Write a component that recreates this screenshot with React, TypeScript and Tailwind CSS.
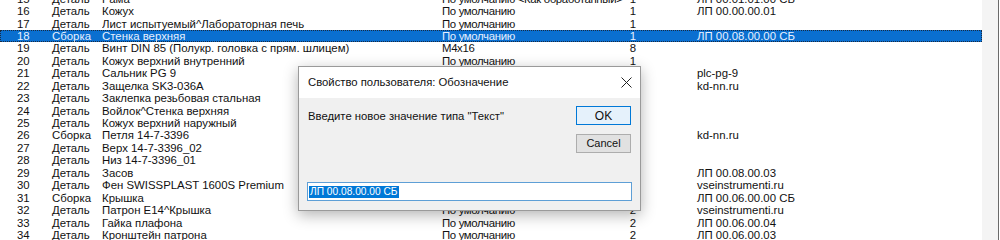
import React from "react";

type Row = {
    n: number;
    type: string;
    name: string;
    mat: string;
    qty: string;
    des: string;
};

const rows: Row[] = [
    { n: 15, type: "Деталь", name: "Рама", mat: "По умолчанию <Как обработанный>", qty: "1", des: "ЛП 00.01.01.00 СБ" },
    { n: 16, type: "Деталь", name: "Кожух", mat: "По умолчанию", qty: "1", des: "ЛП 00.00.00.01" },
    { n: 17, type: "Деталь", name: "Лист испытуемый^Лабораторная печь", mat: "По умолчанию", qty: "1", des: "" },
    { n: 18, type: "Сборка", name: "Стенка верхняя", mat: "По умолчанию", qty: "1", des: "ЛП 00.08.00.00 СБ" },
    { n: 19, type: "Деталь", name: "Винт DIN 85 (Полукр. головка с прям. шлицем)", mat: "M4x16", qty: "8", des: "" },
    { n: 20, type: "Деталь", name: "Кожух верхний внутренний", mat: "По умолчанию", qty: "1", des: "" },
    { n: 21, type: "Деталь", name: "Сальник PG 9", mat: "По умолчанию", qty: "1", des: "plc-pg-9" },
    { n: 22, type: "Деталь", name: "Защелка SK3-036A", mat: "По умолчанию", qty: "1", des: "kd-nn.ru" },
    { n: 23, type: "Деталь", name: "Заклепка резьбовая стальная", mat: "По умолчанию", qty: "4", des: "" },
    { n: 24, type: "Деталь", name: "Войлок^Стенка верхняя", mat: "По умолчанию", qty: "1", des: "" },
    { n: 25, type: "Деталь", name: "Кожух верхний наружный", mat: "По умолчанию", qty: "1", des: "" },
    { n: 26, type: "Сборка", name: "Петля 14-7-3396", mat: "По умолчанию", qty: "2", des: "kd-nn.ru" },
    { n: 27, type: "Деталь", name: "Верх 14-7-3396_02", mat: "По умолчанию", qty: "2", des: "" },
    { n: 28, type: "Деталь", name: "Низ 14-7-3396_01", mat: "По умолчанию", qty: "2", des: "" },
    { n: 29, type: "Деталь", name: "Засов", mat: "По умолчанию", qty: "1", des: "ЛП 00.08.00.03" },
    { n: 30, type: "Деталь", name: "Фен SWISSPLAST 1600S Premium", mat: "По умолчанию", qty: "1", des: "vseinstrumenti.ru" },
    { n: 31, type: "Сборка", name: "Крышка", mat: "По умолчанию", qty: "2", des: "ЛП 00.06.00.00 СБ" },
    { n: 32, type: "Деталь", name: "Патрон E14^Крышка", mat: "По умолчанию", qty: "2", des: "vseinstrumenti.ru" },
    { n: 33, type: "Деталь", name: "Гайка плафона", mat: "По умолчанию", qty: "2", des: "ЛП 00.06.00.04" },
    { n: 34, type: "Деталь", name: "Кронштейн патрона", mat: "По умолчанию", qty: "2", des: "ЛП 00.06.00.03" },
];

function ListRow({ r }: { r: Row }) {
    const sel = r.n === 18;
    return (
        <div
            className={`flex items-center h-[12.44px] leading-[12px] whitespace-nowrap ${
                sel ? "bg-[#0a6fd0] text-[#e6f0ff] outline-1 outline-dotted outline-[#1a2a40] -outline-offset-1" : "text-[#111]"
            }`}
        >
            <span className="w-[35px] pl-[17px] box-content">{r.n}</span>
            <span className="w-[50px]">{r.type}</span>
            <span className="w-[340px] overflow-hidden">{r.name}</span>
            <span className="w-[180px] tracking-[-0.35px]">{r.mat}</span>
            <span className="w-[14px] text-right">{r.qty}</span>
            <span className="w-[61px]" />
            <span className="w-[250px]">{r.des}</span>
        </div>
    );
}

export default function App() {
    return (
        <div className="relative w-[1000px] h-[240px] overflow-hidden bg-white" style={{ fontFamily: "'Liberation Sans', Arial, sans-serif" }}>
            <div className="flex h-full">
                <div className="w-[982px] text-[11.4px] mt-[-7.6px]">
                    {rows.map((r) => (
                        <ListRow key={r.n} r={r} />
                    ))}
                </div>
                <div className="w-[16px] bg-[#f4f4f4]" />
                <div className="w-px bg-[#6a6a6a]" />
                <div className="flex-1 bg-white" />
            </div>

            <div className="absolute left-[298px] top-[66px] w-[343px] h-[145px] border border-[#9a9a9a] bg-[#f0f0f0] shadow-[0_4px_14px_rgba(0,0,0,0.3)] flex flex-col text-[11.3px] text-[#111]">
                <div className="h-[31px] bg-white flex items-center justify-between pl-[9px] pr-[8px]">
                    <span>Свойство пользователя: Обозначение</span>
                    <svg width="11" height="11" viewBox="0 0 11 11">
                        <path d="M0.5 0.5 L10.5 10.5 M10.5 0.5 L0.5 10.5" stroke="#222" strokeWidth="1" fill="none" />
                    </svg>
                </div>
                <div className="flex-1 flex flex-col px-[8px]">
                    <div className="flex justify-between mt-[8px]">
                        <span className="pl-[1px] pt-[2px]">Введите новое значение типа "Текст"</span>
                        <div className="flex flex-col gap-[9px] mr-[1px]">
                            <div className="w-[55px] h-[19px] border border-[#0078d7] bg-[#e5f1fb] flex items-center justify-center text-[12px]">
                                OK
                            </div>
                            <div className="w-[55px] h-[19px] border border-[#adadad] bg-[#e1e1e1] flex items-center justify-center text-[11px]">
                                Cancel
                            </div>
                        </div>
                    </div>
                    <div className="mt-auto mb-[9px] h-[19px] border border-[#5e9fd6] bg-white flex items-center pl-px">
                        <span className="bg-[#0078d7] text-white px-px leading-[12px] text-[10.2px]">ЛП 00.08.00.00 СБ</span>
                    </div>
                </div>
            </div>
        </div>
    );
}
